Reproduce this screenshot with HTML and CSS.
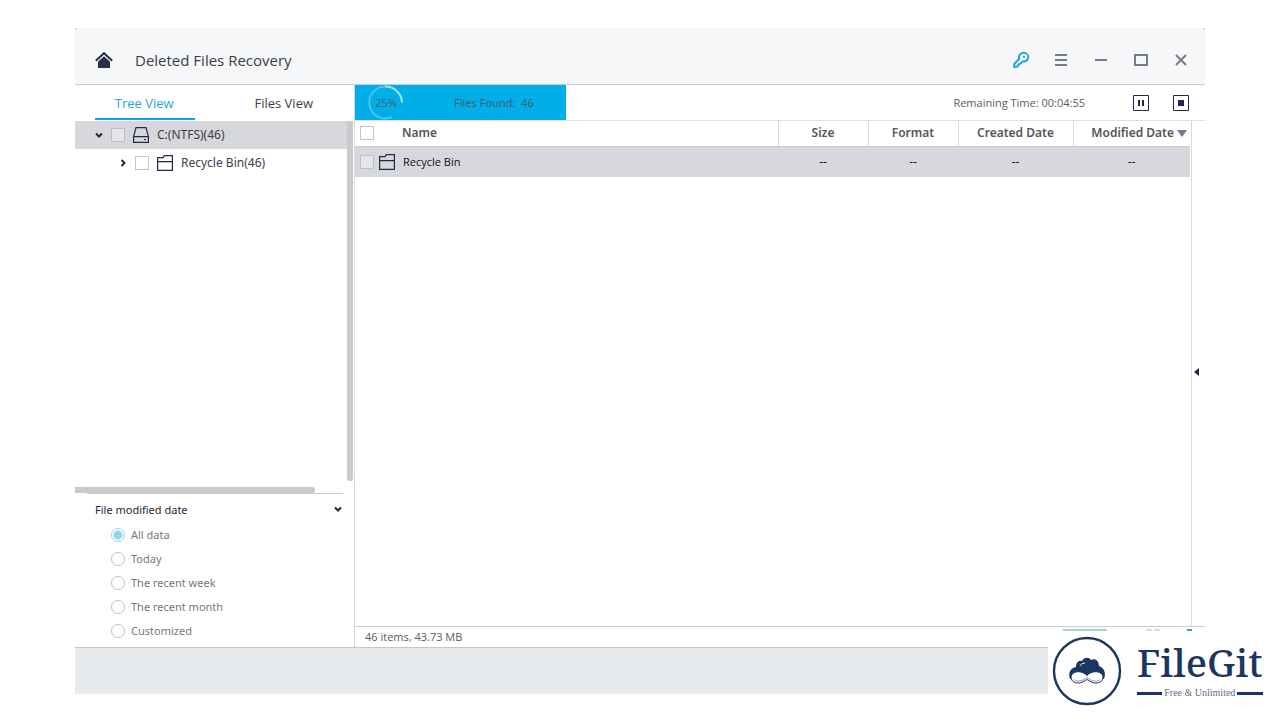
FILE: index.html
```html
<!DOCTYPE html>
<html lang="en">
<head>
<meta charset="utf-8">
<title>Deleted Files Recovery</title>
<link rel="stylesheet" href="styles.css">
</head>
<body>
<div class="window">
  <header class="titlebar">
    <button class="icon-btn home" aria-label="Home"><svg width="18" height="18" viewBox="0 0 18 18"><path d="M.800 9.800 9 2.200l8.200 7.600" fill="none" stroke="#2b2f4a" stroke-width="2"/><path d="M3 10.800 9 5.200l6 5.600V17H3z" fill="#2b2f4a"/></svg></button>
    <h1 class="title">Deleted Files Recovery</h1>
    <div class="window-tools">
      <button class="icon-btn" aria-label="Register"><svg width="18" height="18" viewBox="0 0 18 18"><path d="M7.200 7.800C6 3.500 9.500 1.800 11.700 1.800c2.700 0 4.500 2 4.500 4.300 0 3-2.600 4.900-5.600 4.400L8.500 12.600 6.800 13.200 6.200 14.800 4.200 16H2.200V13.200z" fill="none" stroke="#1ba9d8" stroke-width="2" stroke-linejoin="round"/><circle cx="12" cy="5.800" r="1.200" fill="#1ba9d8"/></svg></button>
      <button class="icon-btn" aria-label="Menu"><svg width="18" height="18" viewBox="0 0 18 18"><path d="M3 4h12M3 9h12M3 14h12" stroke="#777b88" stroke-width="2"/></svg></button>
      <button class="icon-btn" aria-label="Minimize"><svg width="18" height="18" viewBox="0 0 18 18"><path d="M3 9h12" stroke="#777b88" stroke-width="2"/></svg></button>
      <button class="icon-btn" aria-label="Maximize"><svg width="18" height="18" viewBox="0 0 18 18"><path d="M3 4h12v10H3z" fill="none" stroke="#777b88" stroke-width="2"/></svg></button>
      <button class="icon-btn" aria-label="Close"><svg width="18" height="18" viewBox="0 0 18 18"><path d="m4 4 10 10M14 4 4 14" stroke="#777b88" stroke-width="2"/></svg></button>
    </div>
  </header>

  <div class="body">
    <aside class="sidebar">
      <nav class="tabs">
        <button class="tab active">Tree View</button>
        <button class="tab">Files View</button>
      </nav>
      <div class="tree-pane">
        <div class="tree">
          <div class="tree-row selected">
            <button class="chevron" aria-label="Collapse"><svg width="8" height="8" viewBox="0 0 8 8"><path d="m1 2.500 3 3 3-3" fill="none" stroke="#23284a" stroke-width="2"/></svg></button>
            <input class="check" type="checkbox" id="drive">
            <label class="node" for="drive"><svg width="16" height="16" viewBox="0 0 16 16" fill="none" stroke="#23284a" stroke-width="1.200"><path d="M3 .600h10l2.400 9v5.800H.600V9.600zM.600 9.600h14.800"/><path d="M11 12.500h2"/></svg>C:(NTFS)(46)</label>
          </div>
          <div class="tree-row child">
            <button class="chevron" aria-label="Expand"><svg width="8" height="8" viewBox="0 0 8 8"><path d="m2.500 1 3 3-3 3" fill="none" stroke="#23284a" stroke-width="2"/></svg></button>
            <input class="check" type="checkbox" id="bin">
            <label class="node" for="bin"><svg width="16" height="16" viewBox="0 0 16 16" fill="none" stroke="#23284a" stroke-width="1.200"><path d="M.600 2.600h5.600l1-2h8.200v14.800H.600zM.600 6.600h14.800"/></svg>Recycle Bin(46)</label>
          </div>
        </div>
        <div class="scroll-y"></div>
      </div>
      <div class="scroll-x"></div>
      <section class="filter">
        <button class="filter-head">File modified date<svg width="8" height="8" viewBox="0 0 8 8"><path d="m1 1.500 3 3 3-3" fill="none" stroke="#23284a" stroke-width="2"/></svg></button>
        <div class="options" role="radiogroup" aria-label="File modified date">
          <label class="option"><input class="radio" type="radio" name="date" checked>All data</label>
          <label class="option"><input class="radio" type="radio" name="date">Today</label>
          <label class="option"><input class="radio" type="radio" name="date">The recent week</label>
          <label class="option"><input class="radio" type="radio" name="date">The recent month</label>
          <label class="option"><input class="radio" type="radio" name="date">Customized</label>
        </div>
      </section>
    </aside>

    <main class="main">
      <div class="scan">
        <div class="scan-done" style="width:25%">
          <div class="ring"><svg class="ring-art" width="38" height="35" viewBox="0 0 38 35" fill="none" stroke-width="2"><path d="M18 1.500A16 16 0 1 0 25 32" stroke="#45c4ee"/><path d="M18 1.500A16.500 16.500 0 0 1 35 17.500" stroke="#a5e2f6"/></svg><span>25%</span></div>
          <span class="found">Files Found:&nbsp; 46</span>
        </div>
        <span class="remaining">Remaining Time: 00:04:55</span>
        <div class="scan-buttons">
          <button class="icon-btn" aria-label="Pause"><svg width="16" height="16" viewBox="0 0 16 16"><path d="M.500.500h15v15H.500z" fill="none" stroke="#23284a"/><path d="M5 5h2v6H5zM9 5h2v6H9z" fill="#23284a"/></svg></button>
          <button class="icon-btn" aria-label="Stop"><svg width="16" height="16" viewBox="0 0 16 16"><path d="M.500.500h15v15H.500z" fill="none" stroke="#23284a"/><path d="M5 5h6v6H5z" fill="#23284a"/></svg></button>
        </div>
      </div>
      <div class="content">
        <div class="list">
          <table class="files">
            <colgroup><col><col class="c-size"><col class="c-size"><col class="c-created"><col class="c-modified"></colgroup>
            <thead>
              <tr>
                <th><div class="name-head"><input class="check" type="checkbox" aria-label="Select all">Name</div></th>
                <th>Size</th><th>Format</th><th>Created Date</th>
                <th><div class="sorted">Modified Date<svg width="10" height="7" viewBox="0 0 10 7"><path d="M0 0h10L5 7z" fill="#73799c"/></svg></div></th>
              </tr>
            </thead>
            <tbody>
              <tr>
                <td><div class="name-cell"><input class="check" type="checkbox" id="row-bin"><label class="node" for="row-bin"><svg width="16" height="16" viewBox="0 0 16 16" fill="none" stroke="#23284a" stroke-width="1.200"><path d="M.600 2.600h5.600l1-2h8.200v14.800H.600zM.600 6.600h14.800"/></svg>Recycle Bin</label></div></td>
                <td>--</td><td>--</td><td>--</td><td>--</td>
              </tr>
            </tbody>
          </table>
        </div>
        <div class="drawer"><button class="icon-btn" aria-label="Show preview"><svg width="5" height="8" viewBox="0 0 5 8"><path d="M5 0v8L0 4z" fill="#23284a"/></svg></button></div>
      </div>
      <div class="status"><span>46 items, 43.73 MB</span>
        <div class="views"><i class="mark green"></i><i class="mark gray"></i><i class="mark gray"></i><i class="mark blue"></i></div>
      </div>
    </main>
  </div>
  <footer class="bottom"></footer>
</div>

<div class="brand">
  <svg width="70" height="70" viewBox="0 0 70 70">
    <circle cx="35" cy="35" r="33" fill="#fff" stroke="#1b3761" stroke-width="2.400"/>
    <path d="M18 43C16 37 18 32 24 31C24 26 27 24 30 25C32 21 37 21 39 24C43 22 47 25 47 30C53 32 54 38 52 43z" fill="#1b3761"/>
    <path d="M28 30q1-3 5-3" fill="none" stroke="#dfe5ee"/>
    <path d="M35 39.500C31 35.500 26 35 22.500 36.500C18 38.500 18 44 22 46C27 48.500 31 46 35 43.500C39 46 43 48.500 48 46C52 44 52 38.500 47.500 36.500C44 35 39 35.500 35 39.500z" fill="#fff" stroke="#1b3761"/>
    <path d="M35 41.500C31 45 25 46.500 22 43.500M35 41.500C39 45 45 46.500 48 43.500" fill="none" stroke="#8e9bb1"/>
  </svg>
  <div class="brand-text">
    <span class="brand-name">FileGit</span>
    <span class="brand-sub">Free &amp; Unlimited</span>
  </div>
</div>
</body>
</html>
```
FILE: styles.css
```css
* { box-sizing: border-box; }

body {
  margin: 0;
  height: 100vh;
  padding: 28px 75px 26px;
  display: flex;
  position: relative;
  background: #fff;
  color: #3b3d4a;
  font-family: "Open Sans", "Noto Sans", sans-serif;
  font-size: 12px;
  line-height: 16px;
}

button {
  border: 0;
  padding: 0;
  background: none;
  color: inherit;
  font: inherit;
}

svg { display: block; flex: none; }

.window { flex: 1; min-width: 0; display: flex; flex-direction: column; }

.titlebar {
  height: 57px;
  padding: 8px 15px 0 20px;
  display: flex;
  align-items: center;
  background:
    linear-gradient(135deg, #e2e46a 2px, transparent 2px),
    linear-gradient(225deg, #e2e46a 2px, transparent 2px),
    #f6f7f9;
  border-bottom: 1px solid #cbccd0;
}
.titlebar .title { margin: 0 0 0 22px; font-size: 15px; font-weight: 400; line-height: 20px; }
.window-tools { margin-left: auto; display: flex; gap: 22px; }

.body { flex: 1; min-height: 0; display: flex; }

.sidebar {
  width: 280px;
  display: flex;
  flex-direction: column;
  border-right: 1px solid #d8d9db;
}
.tabs { height: 36px; padding: 0 20px; display: flex; gap: 40px; }
.tab { width: 100px; padding: 2px 1px 0 0; font-size: 13px; border-bottom: 2px solid transparent; margin-bottom: 1px; }
.tab.active { color: #1ba9d8; border-color: #06a9dc; }

.tree-pane { flex: 1; display: flex; }
.tree { flex: 1; font-family: "Noto Sans", "Open Sans", sans-serif; }
.tree-row { height: 28px; padding-left: 20px; display: flex; align-items: center; }
.tree-row.selected { background: #d7d8db; }
.tree-row.child { padding-left: 44px; }
.chevron { margin-right: 8px; }
.node { display: flex; align-items: center; gap: 8px; }
.tree-row .node { margin-left: 8px; }
.scroll-y { width: 6px; margin: 0 1px 6px 0; background: #cacaca; border-radius: 0 0 2px 2px; }
.scroll-x { width: 240px; height: 6px; background: #cacaca; border-radius: 0 2px 2px 0; }

.check {
  appearance: none;
  flex: none;
  width: 14px;
  height: 14px;
  margin: 0;
  border: 1px solid #c4c5ca;
  background: #fff;
}
.selected .check, tbody .check { background: #e4e5e8; border-color: #bfc0c4; }

.filter {
  height: 154px;
  margin: 0 11px 0 12px;
  padding: 8px 1px 0 8px;
  border-top: 1px solid #cbccd0;
  font-family: "Noto Sans", "Open Sans", sans-serif;
  font-size: 11px;
  color: #777;
}
.filter-head {
  width: 100%;
  display: flex;
  align-items: center;
  justify-content: space-between;
  color: #26283a;
}
.options { padding: 5px 0 0 16px; }
.option { height: 24px; display: flex; align-items: center; gap: 6px; }
.radio {
  appearance: none;
  width: 14px;
  height: 14px;
  margin: 0;
  border: 1px solid #bfc0c4;
  border-radius: 50%;
}
.radio:checked { border-color: #8dd9e9; background: radial-gradient(circle, #8dd9e9 4px, #fff 5px); }

.main { flex: 1; min-width: 0; display: flex; flex-direction: column; }
.scan { height: 36px; display: flex; align-items: center; border-bottom: 1px solid #dedfe2; font-size: 11px; color: #5b5b62; }
.scan-done { max-width: 211px; height: 35px; flex: none; display: flex; align-items: center; background: #02aee8; color: #3b6172; }
.ring { width: 38px; height: 35px; margin-left: 12px; display: grid; place-items: center; }
.ring > * { grid-area: 1 / 1; }
.found { margin-left: 49px; white-space: nowrap; font-family: "Noto Sans", "Open Sans", sans-serif; }
.remaining { margin-left: auto; }
.scan-buttons { margin: 0 16px 0 48px; display: flex; gap: 24px; }

.content { flex: 1; min-height: 0; display: flex; }
.list { flex: 1; padding-right: 1px; border-right: 1px solid #d8d9db; }
.drawer { width: 13px; display: flex; align-items: center; padding: 0 0 4px 2px; }
.files { width: 100%; table-layout: fixed; border-collapse: collapse; }
.c-size { width: 90px; }
.c-created { width: 115px; }
.c-modified { width: 117px; }
.files th { height: 25px; padding: 0; font-family: "Noto Sans", "Open Sans", sans-serif; font-weight: 600; color: #55555b; border-bottom: 1px solid #cbccd0; }
.files th + th { border-left: 1px solid #d8d9db; }
.files td { height: 31px; padding: 0; text-align: center; color: #111; background: #d7d8db; }
.name-head { padding-left: 5px; display: flex; align-items: center; gap: 28px; }
.name-cell { padding-left: 5px; display: flex; align-items: center; gap: 5px; font-size: 11px; }
.sorted { display: flex; align-items: center; justify-content: flex-end; gap: 3px; padding-right: 3px; }

.status { height: 21px; padding: 0 13px 0 10px; display: flex; justify-content: space-between; align-items: center; border-top: 1px solid #cbccd0; font-size: 11px; color: #5b5b62; }
.views { height: 16px; display: flex; }
.mark { height: 2px; }
.mark.green { width: 44px; margin-right: 39px; background: #a4d9c5; }
.mark.gray { width: 6px; margin-right: 2px; background: #dcdcdc; }
.mark.blue { width: 5px; margin-left: 25px; background: #2ba4b8; }

.bottom { height: 47px; background: #e6eaed; border-top: 1px solid #c5c8cb; }

.brand {
  position: absolute;
  right: 0;
  bottom: 0;
  width: 232px;
  height: 89px;
  padding: 5px 19px 0 4px;
  display: flex;
  gap: 15px;
  background: #fff;
  color: #1b3761;
}
.brand-text { flex: 1; font-family: "Noto Serif", "DejaVu Serif", "Liberation Serif", serif; }
.brand-name { display: block; font-size: 39px; font-weight: 500; line-height: 52px; white-space: nowrap; }
.brand-sub { display: flex; align-items: center; gap: 2px; font-family: "Liberation Serif", serif; font-size: 10px; line-height: 10px; white-space: nowrap; color: #5f6c82; }
.brand-sub::before, .brand-sub::after { content: ""; flex: 1; height: 3px; background: #1b3761; }
```
